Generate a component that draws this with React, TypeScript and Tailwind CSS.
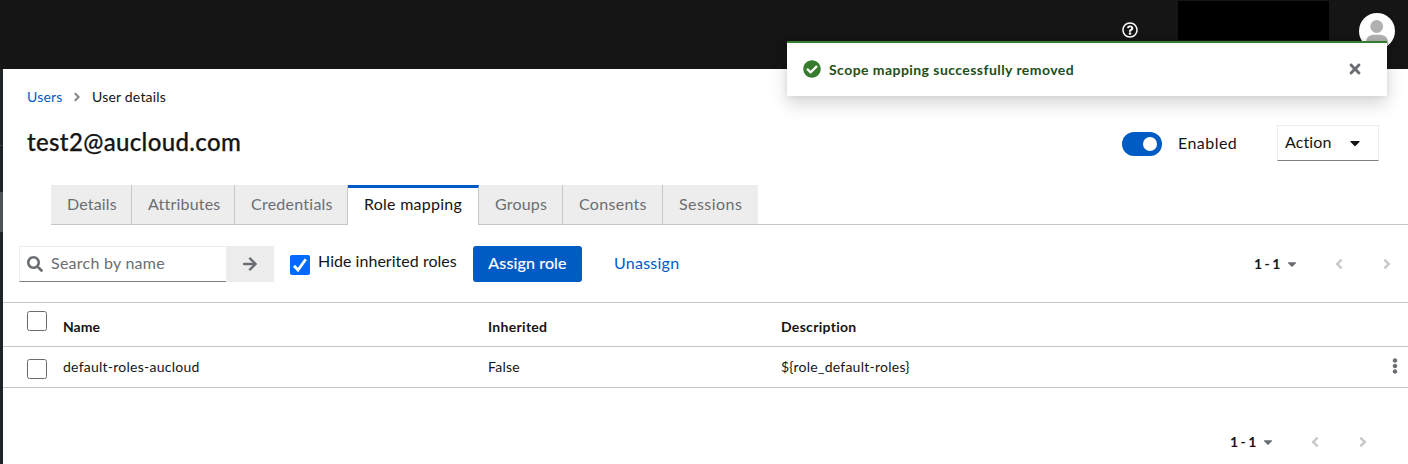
import React from "react";
import {
  FaAngleLeft,
  FaAngleRight,
  FaArrowRight,
  FaCaretDown,
  FaCheckCircle,
  FaEllipsisV,
  FaRegQuestionCircle,
  FaSearch,
  FaTimes,
} from "react-icons/fa";

const tabs = [
  { label: "Details", size: "w-[81px]", text: "tracking-[0.15px]" },
  { label: "Attributes", size: "w-[103px]", text: "tracking-[0.2px]" },
  { label: "Credentials", size: "w-[113px]", text: "tracking-[0.25px]" },
  { label: "Role mapping", size: "w-[131px]", text: "tracking-[0.25px]", active: true },
  { label: "Groups", size: "w-[84px]", text: "tracking-[0.2px]" },
  { label: "Consents", size: "w-[100px]", text: "tracking-[0.3px]" },
  { label: "Sessions", size: "w-[95px]", text: "tracking-[0.45px]", last: true },
];

function Masthead() {
  return (
    <header className="flex h-[69px] shrink-0 justify-end bg-[#151515] pr-[13px]">
      <FaRegQuestionCircle className="mt-[22px] size-4 text-white" />
      <div className="mt-px ml-10 h-[39px] w-[151px] bg-black" />
      <svg className="mt-[13px] ml-[30px] size-9" viewBox="0 0 36 36">
        <defs>
          <clipPath id="avatar">
            <circle cx="18" cy="18" r="18" />
          </clipPath>
        </defs>
        <g clipPath="url(#avatar)">
          <rect width="36" height="36" fill="#fff" />
          <circle cx="17.7" cy="13.5" r="6.4" fill="#b1b1b1" />
          <path d="M6.8 36V29Q8 21.8 14.5 21.8H21Q27.8 21.8 29.2 29V36Z" fill="#b1b1b1" />
        </g>
      </svg>
    </header>
  );
}

function Toast() {
  return (
    <div
      role="alert"
      className="absolute top-[41px] left-[787px] flex h-[55px] w-[600px] items-center border-t-2 border-[#377b2e] bg-white pr-6 pb-px pl-4 shadow-[0_8px_16px_rgba(3,3,3,0.16),0_0_6px_rgba(3,3,3,0.08)]"
    >
      <FaCheckCircle className="size-[18px] text-[#377b2e]" />
      <span className="ml-2 text-sm leading-[21px] font-bold tracking-[0.44px] text-[#1e4f18]">
        Scope mapping successfully removed
      </span>
      <FaTimes className="ml-auto size-4 text-[#6a6e73]" />
    </div>
  );
}

function Checkbox({ className }: { className: string }) {
  return (
    <span
      role="checkbox"
      aria-checked="false"
      className={"block size-5 rounded-[2.5px] border border-[#6b6b6b] bg-white " + className}
    />
  );
}

function Pagination() {
  return (
    <div className="flex h-9 items-center">
      <span className="w-[25px] pb-px text-sm font-bold tracking-[-0.5px] whitespace-nowrap">1 - 1</span>
      <FaCaretDown className="ml-[6px] size-[14px] text-[#6a6e73]" />
      <FaAngleLeft className="ml-8 size-4 text-[#c8c8c8]" />
      <FaAngleRight className="ml-8 size-4 text-[#c8c8c8]" />
    </div>
  );
}

export default function App() {
  return (
    <div className="relative flex h-[464px] w-[1408px] flex-col overflow-hidden bg-[#212427] font-['Lato',sans-serif] text-base text-[#151515]">
      <Masthead />
      <div className="flex flex-1">
        <aside className="w-[3px] shrink-0 pt-[76px]">
          <div className="h-[47px] border-t border-[#3c3f42]" />
          <div className="h-10 bg-[#4f5255]" />
        </aside>
        <main className="flex min-w-0 flex-1 flex-col bg-white">
          <nav className="flex h-14 items-center pl-6 text-sm">
            <a className="w-[35px] tracking-[0.2px] text-[#005bc4]">Users</a>
            <FaAngleRight className="ml-2 size-[14px] text-[#8a8d90]" />
            <span className="ml-[8px] tracking-[0.2px]">User details</span>
          </nav>

          <div className="flex h-[60px] pr-[29px] pl-6">
            <h1 className="text-2xl leading-[34px] font-medium tracking-[0.36px] [-webkit-text-stroke:0.25px_#151515]">
              test2@aucloud.com
            </h1>
            <div className="mt-[7px] ml-auto flex h-6 w-10 justify-end rounded-full bg-[#005bc4] p-[5px]">
              <span className="size-[14px] rounded-full bg-white" />
            </div>
            <span className="mt-[6px] ml-4 w-[59px] leading-6 tracking-[0.45px]">Enabled</span>
            <button className="ml-10 flex h-9 w-[102px] items-center border border-[#ededed] border-b-[#7b7f83] pb-px pl-[7px]">
              <span className="w-[47px] pb-[2px] text-left tracking-[0.1px]">Action</span>
              <FaCaretDown className="ml-[15px] size-4" />
            </button>
          </div>

          <div className="flex h-10 pl-12">
            {tabs.map((tab) => (
              <div
                key={tab.label}
                className={
                  "flex items-center pl-4 whitespace-nowrap " +
                  tab.size +
                  " " +
                  tab.text +
                  (tab.active
                    ? " border-t-3 border-r border-t-[#005bc4] border-r-[#c7c7c7] pb-[5px]"
                    : " border-b border-b-[#c7c7c7] bg-[#ededed] pb-px text-[#6a6e73]" +
                      (tab.last ? "" : " border-r border-r-[#c7c7c7]"))
                }
              >
                {tab.label}
              </div>
            ))}
            <div className="flex-1 border-b border-[#c7c7c7]" />
          </div>

          <div className="flex h-[77px] items-start pt-[21px] pl-4">
            <div className="flex h-9 w-[207px] items-center border border-r-0 border-[#ededed] border-b-[#7b7f83] pl-[7px]">
              <FaSearch className="size-4 text-[#6a6e73]" />
              <span className="ml-2 pb-[2px] tracking-[0.25px] text-[#6a6e73]">Search by name</span>
            </div>
            <button className="flex h-9 w-12 items-center justify-center bg-[#ededed] pb-px">
              <FaArrowRight className="size-4 text-[#6a6e73]" />
            </button>
            <svg className="mt-[9px] ml-4 size-5 rounded-[2px] bg-[#006aff]" viewBox="0 0 20 20">
              <path d="M4 10.8 8 15 15.8 4.2" fill="none" stroke="#fff" strokeWidth="2.8" />
            </svg>
            <span className="mt-[3px] ml-2 w-[139px] leading-6 tracking-[0.03px] whitespace-nowrap">
              Hide inherited roles
            </span>
            <button className="ml-4 h-9 w-[109px] rounded-[3px] bg-[#005bc4] pb-[2px] tracking-[0.15px] text-white [-webkit-text-stroke:0.2px_white]">
              Assign role
            </button>
            <button className="ml-8 h-9 pb-[2px] tracking-[0.25px] text-[#005bc4]">Unassign</button>
            <div className="ml-auto pr-[13px]">
              <Pagination />
            </div>
          </div>

          <div className="grid h-11 shrink-0 grid-cols-[36px_425px_293px_1fr] border-t border-[#c7c7c7] pl-6 text-sm font-bold tracking-[0.3px]">
            <Checkbox className="mt-2" />
            <span className="pt-[14px] tracking-normal">Name</span>
            <span className="pt-[14px]">Inherited</span>
            <span className="pt-[14px]">Description</span>
          </div>
          <div className="grid h-[42px] shrink-0 grid-cols-[36px_425px_293px_1fr_21px] border-y border-[#c7c7c7] pl-6 text-sm tracking-[0.25px]">
            <Checkbox className="mt-3" />
            <span className="pt-[10px]">default-roles-aucloud</span>
            <span className="pt-[10px]">False</span>
            <span className="pt-[10px]">{"${role_default-roles}"}</span>
            <FaEllipsisV className="mt-[11px] size-4 text-[#6a6e73]" />
          </div>

          <div className="flex justify-end pt-9 pr-[37px]">
            <Pagination />
          </div>
        </main>
      </div>
      <Toast />
    </div>
  );
}
